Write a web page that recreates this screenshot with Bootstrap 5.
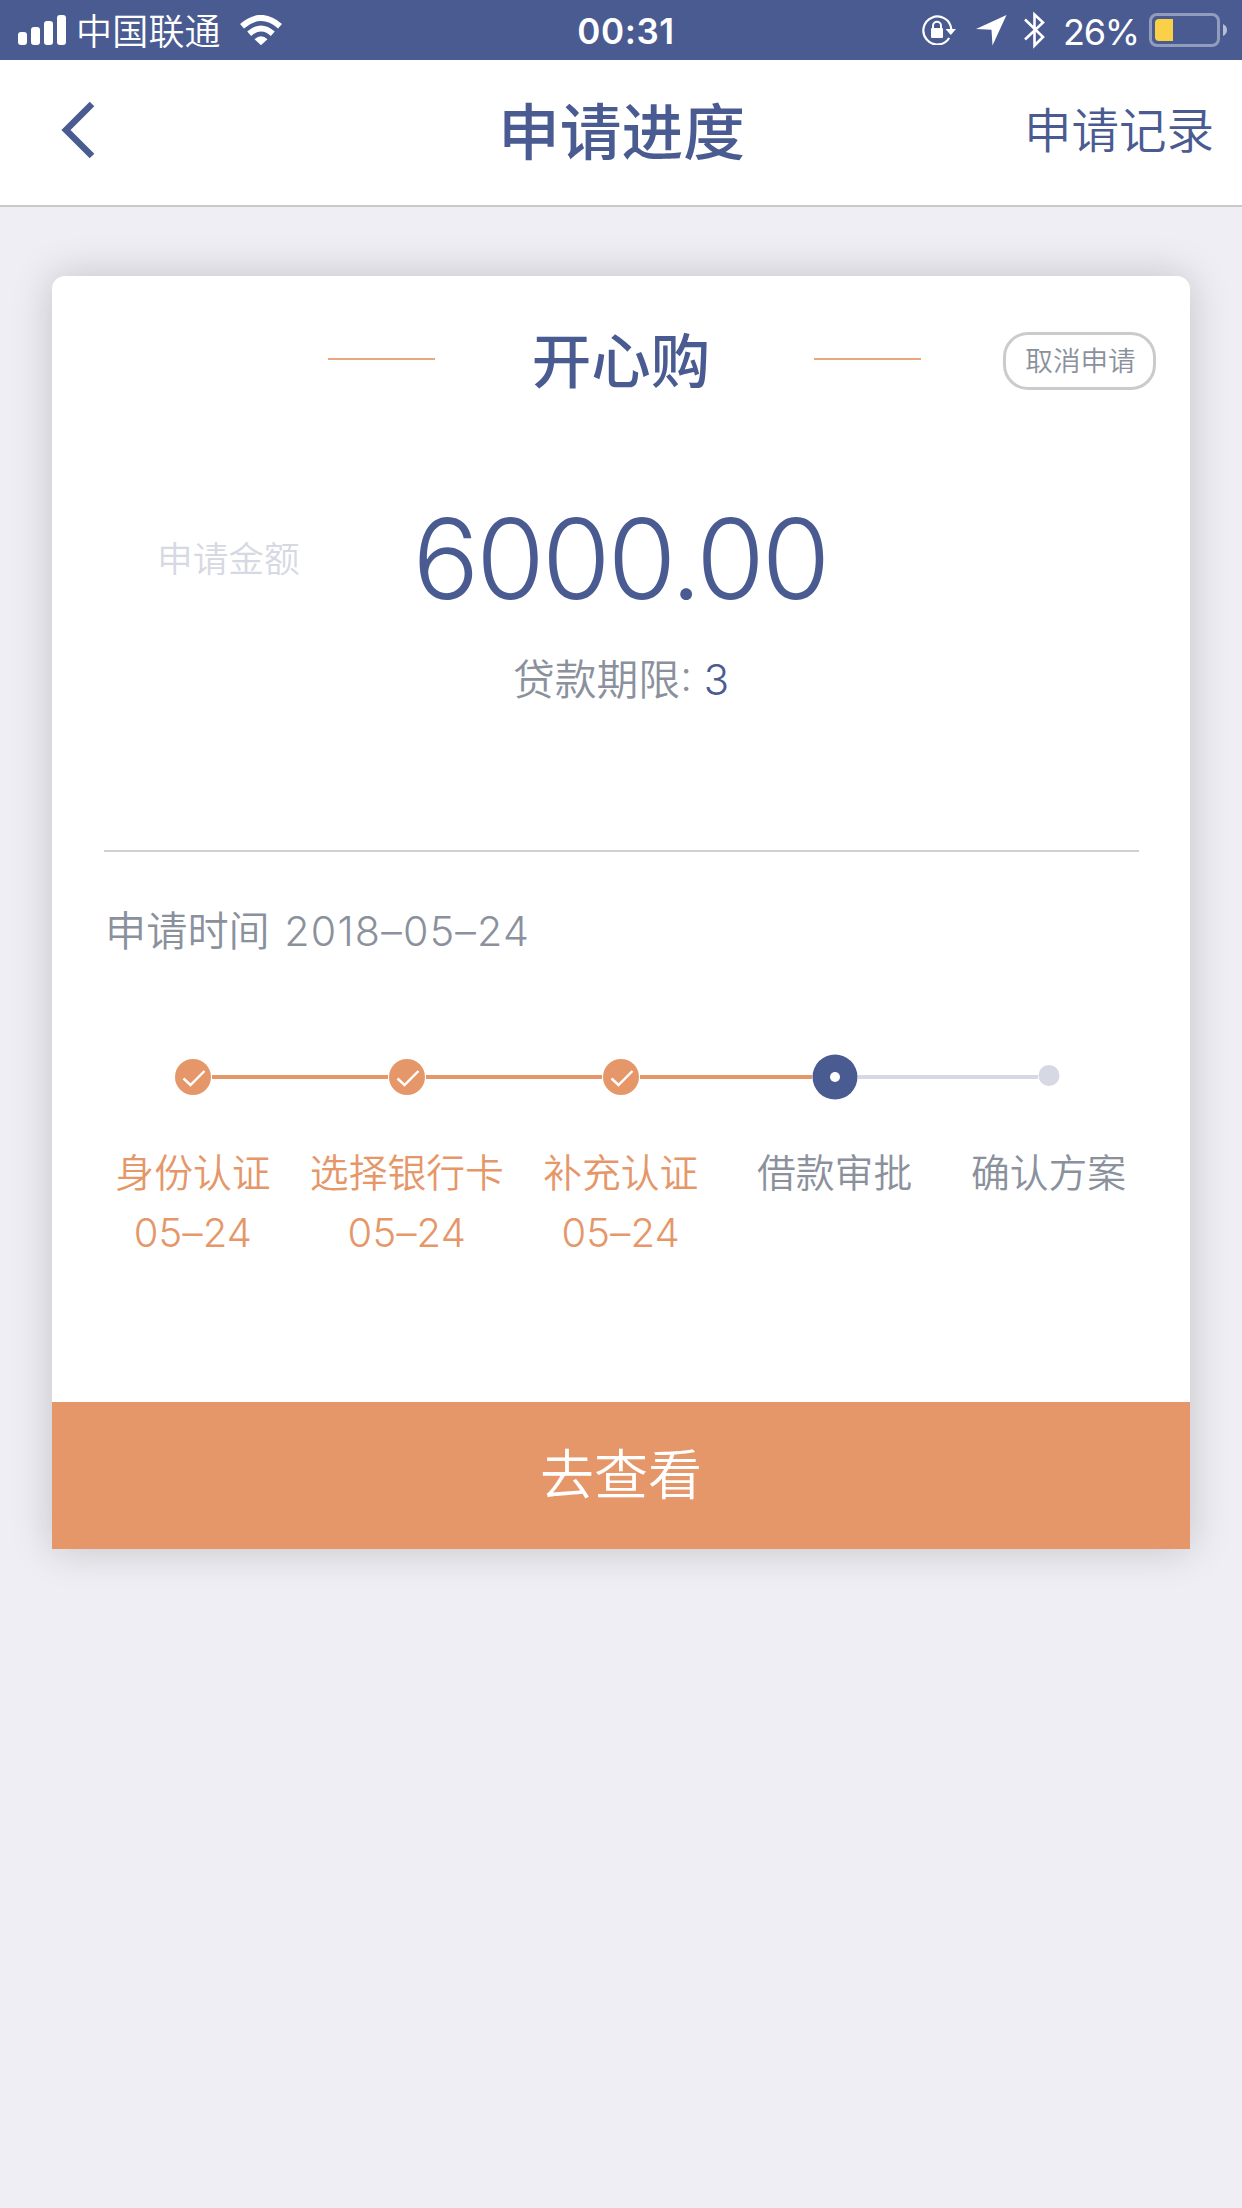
<!DOCTYPE html>
<html lang="zh-CN">
<head>
<meta charset="utf-8">
<meta name="viewport" content="width=device-width, initial-scale=1">
<title>申请进度</title>
<link rel="stylesheet" href="https://cdn.jsdelivr.net/npm/bootstrap@5.3.0/dist/css/bootstrap.min.css">
<style>
:root{--navy:#4a5b91;--peach:#e5976a;--ash:#8a919d;--pale:#d6d9e3}
body{background:#efeef4;font-family:Inter,"Noto Sans CJK SC",sans-serif;font-weight:350;color:var(--ash);min-height:2208px;line-height:1}
svg{display:block;flex:none}
.c-navy{color:var(--navy)}
.c-peach{color:var(--peach)}
.status-bar{height:60px;background:var(--navy);color:#fff;padding:0 14px 0 18px;font-size:36px}
.status-bar>div{flex:1 1 0}
.carrier{margin-left:10px;letter-spacing:.2px;padding-top:3px}
.wifi{margin-left:19px}
.clock{font-weight:600;font-size:35px;letter-spacing:.6px;padding-top:2px;padding-left:6px}
.percent{font-size:36px;font-weight:400;letter-spacing:-1.2px;padding-top:3px;margin-left:17px}
.icon-location{margin-left:19px}
.icon-bluetooth{margin-left:17px}
.icon-battery{margin-left:10px}
.top-bar{height:147px;background:#fff;border-bottom:2px solid #c9c9cb;padding:0 28px 4px}
.top-bar>div{flex:1 1 0}
.back{margin-left:33px;margin-bottom:1px}
.top-title{font-size:61.8px;font-weight:500;line-height:80px;margin:0;padding-top:4px;padding-left:1px}
.top-link{font-size:47.5px;line-height:60px;text-decoration:none}
.loan-card{margin:69px 52px 0;height:1273px;border:0;border-radius:13px 13px 0 0;box-shadow:0 0 42px rgba(0,0,0,.19)}
.card-top{height:166px;padding:0 34px 0 41px}
.side{flex:1 1 0}
.dash{width:107px;height:2px;background:#eba780}
.product{font-size:59.5px;font-weight:500;line-height:80px;width:379px;margin:0;padding:4px 7px 0 0}
.btn-cancel{width:153px;height:58px;border:3px solid #cbcbcb;border-radius:25px;font-size:27.6px;font-weight:350;line-height:50px;padding:0 0 0 2px;color:var(--ash);margin-top:4px}
.amount-row{margin-top:57px}
.amount-side{width:246px}
.amount-label{font-size:35.7px;color:var(--pale);padding:2px 0 0 105px}
.amount{font-size:111px;letter-spacing:-2.9px;line-height:120px;font-weight:360;padding-right:2px}
.term{font-size:41.8px;line-height:60px;margin-top:31px}
.rule{margin:140px 51px 0 52px;height:2px;background:#d0d0d2}
.date-row{font-size:41.2px;line-height:60px;padding-left:53px;margin-top:49px}
.date-value{letter-spacing:1.2px;margin-left:3px}
.steps{padding:0 34px;margin-top:93px}
.step{width:213.9px;flex:none}
.track{height:46px;margin-bottom:43px}
.seg{height:4px;flex:1 1 0;background:var(--peach)}
.seg.off{background:var(--pale)}
.seg.none{background:transparent}
.step-name{font-size:38.8px;line-height:60px;white-space:nowrap}
.step-date{font-size:40px;line-height:60px;letter-spacing:.2px}
.btn-view{height:147px;background:var(--peach);color:#fff;border:0;border-radius:0;font-size:54px;font-weight:350}
</style>
</head>
<body>
<header>
<div class="status-bar d-flex align-items-center">
  <div class="d-flex align-items-center">
    <svg width="48" height="30" viewBox="0 0 48 30" fill="#fff"><rect y="17" width="9" height="13" rx="3"/><rect x="13" y="12" width="9" height="18" rx="3"/><rect x="26" y="6" width="9" height="24" rx="3"/><rect x="39" width="9" height="30" rx="3"/></svg>
    <span class="carrier">中国联通</span>
    <svg class="wifi" width="42" height="30" viewBox="0 0 42 30"><g fill="none" stroke="#fff" stroke-width="6"><path d="M2 11.2Q21-5.2 40 11.2"/><path d="M9.2 18.7Q21 8.3 32.8 18.7"/></g><path d="M14.5 24.2Q21 18.2 27.5 24.2L21 30.2Z" fill="#fff"/></svg>
  </div>
  <span class="clock">00:31</span>
  <div class="d-flex align-items-center justify-content-end">
    <svg width="35" height="30" viewBox="0 0 35 30"><path d="M27.2 23A14 14 0 1 1 29.3 14" fill="none" stroke="#fff" stroke-width="2.2"/><path d="M23.5 14H34L28.8 20Z" fill="#fff"/><rect x="9" y="13" width="12" height="10" rx="1" fill="#fff"/><path d="M11 14v-3.200a4 4 0 0 1 8 0V14" fill="none" stroke="#fff" stroke-width="2"/></svg>
    <svg class="icon-location" width="31" height="31" viewBox="0 0 31 31"><path d="M30.500 0L16.500 30.500L15.500 14.800L0 14Z" fill="#fff"/></svg>
    <svg class="icon-bluetooth" width="22" height="38" viewBox="0 0 22 38"><path d="M1 8.500L19 26L10.500 34.500V3.500L19 11.500L1 28.500" fill="none" stroke="#fff" stroke-width="2.600"/></svg>
    <span class="percent">26%</span>
    <svg class="icon-battery" width="79" height="34" viewBox="0 0 79 34"><rect x="1.500" y="1.500" width="68" height="31" rx="6.500" fill="none" stroke="#929dbd" stroke-width="3"/><path d="M10 6H24V28H10Q6 28 6 24V10Q6 6 10 6Z" fill="#fad047"/><path d="M74 11Q78 13 78 17T74 23Z" fill="#b7bed3"/></svg>
  </div>
</div>
<nav class="top-bar d-flex align-items-center c-navy">
  <div><svg class="back" width="34" height="58" viewBox="0 0 34 58"><path d="M31 3L5 29L31 55" fill="none" stroke="#4a5b91" stroke-width="6.500"/></svg></div>
  <h1 class="top-title">申请进度</h1>
  <div class="text-end"><a class="top-link c-navy" href="#">申请记录</a></div>
</nav>
</header>
<main class="card loan-card">
  <div class="card-top d-flex align-items-center">
    <div class="side d-flex justify-content-end"><span class="dash"></span></div>
    <h2 class="product c-navy text-center">开心购</h2>
    <div class="side d-flex align-items-center justify-content-between"><span class="dash"></span><button class="btn btn-cancel">取消申请</button></div>
  </div>
  <div class="amount-row d-flex align-items-center">
    <div class="amount-side amount-label text-nowrap">申请金额</div>
    <div class="amount c-navy flex-grow-1 text-center">6000.00</div>
    <div class="amount-side"></div>
  </div>
  <div class="term text-center">贷款期限: <span class="c-navy">3</span></div>
  <div class="rule"></div>
  <div class="date-row">申请时间 <span class="date-value">2018–05–24</span></div>
  <div class="steps d-flex text-center">
    <div class="step c-peach"><div class="track d-flex align-items-center"><span class="seg none"></span><svg width="38" height="38" viewBox="0 0 38 38"><circle cx="19" cy="19" r="18" fill="#e5976a"/><path d="M9.500 20.500L16.500 27L30.500 13" fill="none" stroke="#fff" stroke-width="2.4"/></svg><span class="seg"></span></div><div class="step-name">身份认证</div><div class="step-date">05–24</div></div>
    <div class="step c-peach"><div class="track d-flex align-items-center"><span class="seg"></span><svg width="38" height="38" viewBox="0 0 38 38"><circle cx="19" cy="19" r="18" fill="#e5976a"/><path d="M9.500 20.500L16.500 27L30.500 13" fill="none" stroke="#fff" stroke-width="2.4"/></svg><span class="seg"></span></div><div class="step-name">选择银行卡</div><div class="step-date">05–24</div></div>
    <div class="step c-peach"><div class="track d-flex align-items-center"><span class="seg"></span><svg width="38" height="38" viewBox="0 0 38 38"><circle cx="19" cy="19" r="18" fill="#e5976a"/><path d="M9.500 20.500L16.500 27L30.500 13" fill="none" stroke="#fff" stroke-width="2.4"/></svg><span class="seg"></span></div><div class="step-name">补充认证</div><div class="step-date">05–24</div></div>
    <div class="step"><div class="track d-flex align-items-center"><span class="seg"></span><svg width="46" height="46" viewBox="0 0 46 46"><circle cx="23" cy="23" r="22.500" fill="#4a5b91"/><circle cx="23" cy="23" r="5" fill="#fff"/></svg><span class="seg off"></span></div><div class="step-name">借款审批</div></div>
    <div class="step"><div class="track d-flex align-items-center"><span class="seg off"></span><svg width="22" height="24" viewBox="0 0 22 24"><circle cx="11" cy="10.500" r="10.500" fill="#d6d9e3"/></svg><span class="seg none"></span></div><div class="step-name">确认方案</div></div>
  </div>
  <button class="btn btn-view w-100 mt-auto">去查看</button>
</main>
<script src="https://cdn.jsdelivr.net/npm/bootstrap@5.3.0/dist/js/bootstrap.bundle.min.js"></script>
</body>
</html>
